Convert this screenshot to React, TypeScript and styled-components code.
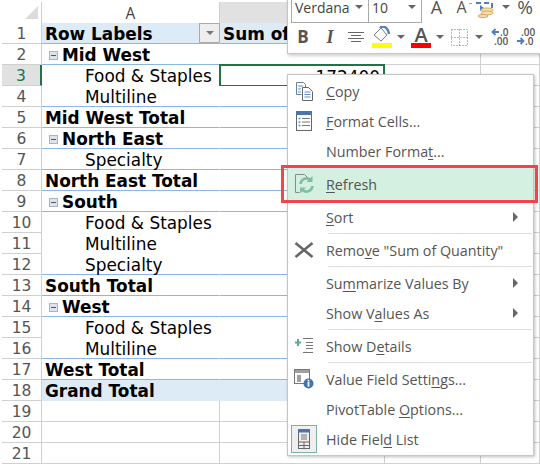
import React from "react";
import styled, { createGlobalStyle } from "styled-components";

const Global = createGlobalStyle`
  html, body { margin: 0; padding: 0; background: #fff; }
  * { box-sizing: border-box; }
`;

const UI = `"Open Sans", "Noto Sans", "Liberation Sans", sans-serif`;
const XL = `"DejaVu Sans", Verdana, sans-serif`;

const Page = styled.div`
  position: relative; width: 540px; height: 464px; overflow: hidden;
  background: #fff; font-family: ${XL}; padding-left: 2px;
`;
const COLS = "40px 178px 165px 96px 59px";
const HeadRow = styled.div`
  display: grid; grid-template-columns: ${COLS}; height: 23px;
  padding-top: 2px; border-bottom: 1px solid #d0d0d0;
`;
const Corner = styled.div`
  border-right: 1px solid #d0d0d0; position: relative; background: #fff;
  &::after { content: ""; position: absolute; left: 23px; top: 4px; width: 0; height: 0;
    border-left: 13px solid transparent; border-bottom: 13px solid #dcdcdc; }
`;
const ColHead = styled.div<{ $on?: boolean }>`
  display: flex; align-items: center; justify-content: center;
  font: 15.5px ${UI}; color: #444;
  border-right: 1px solid ${p => (p.$on ? "#c8c8c8" : "#d0d0d0")};
  background: ${p => (p.$on ? "#e1e1e1" : "#fff")};
  border-bottom: ${p => (p.$on ? "2px solid #217346" : "none")};
  margin-bottom: ${p => (p.$on ? "-1px" : "0")};
`;
const Row = styled.div`
  display: grid; grid-template-columns: ${COLS}; grid-template-rows: 21px; height: 21px;
`;
const Num = styled.div<{ $on?: boolean }>`
  display: flex; align-items: center; justify-content: center; padding-top: 2px;
  font: 15.5px/18px ${XL}; color: ${p => (p.$on ? "#217346" : "#555")};
  background: ${p => (p.$on ? "#e1e1e1" : "#fff")};
  border-bottom: 1px solid #d0d0d0;
  border-right: ${p => (p.$on ? "2px solid #217346" : "1px solid #d0d0d0")};
`;
type Kind = "head" | "group" | "item" | "total" | "grand" | "empty";
const Cell = styled.div<{ $kind: Kind; $line?: boolean }>`
  position: relative; display: flex; align-items: center; white-space: nowrap;
  font-family: ${XL}; font-size: 16.9px; line-height: 18px; color: #000;
  font-weight: ${p => (p.$kind === "item" || p.$kind === "empty" ? 400 : 700)};
  padding-left: ${p => (p.$kind === "item" ? 43 : p.$kind === "group" ? 7 : 3)}px;
  padding-top: 2px;
  background: ${p => (p.$kind === "head" || p.$kind === "grand" ? "#ddebf7" : "#fff")};
  border-bottom: 1px solid ${p => (p.$kind === "empty" ? "#d0d0d0" : p.$line ? "#8ab8e2" : "transparent")};
  border-right: 1px solid ${p => (p.$kind === "empty" ? "#d0d0d0" : "transparent")};
`;
const Selected = styled.div`
  position: absolute; inset: -1px -1px -2px -1px; border: 2px solid #217346;
  display: flex; align-items: center; justify-content: flex-end; padding: 2px 3px 0 0;
  font: 400 16.9px/18px ${XL}; color: #000;
`;
const Plain = styled.div`
  border-bottom: 1px solid #d0d0d0; border-right: 1px solid #d0d0d0;
`;
const Collapse = styled.span`
  width: 9px; height: 9px; margin-right: 4px; border: 1px solid #a9b4c2; background: #dde3ea;
  display: inline-flex; align-items: center; justify-content: center;
  &::after { content: ""; width: 5px; height: 1px; background: #555; }
`;
const Filter = styled.span`
  margin: -2px -1px 0 auto; width: 21px; height: 20px;
  background: #eeeeee; border: 1px solid #ababab;
  display: flex; align-items: center; justify-content: center;
  &::after { content: ""; border-left: 4px solid transparent; border-right: 4px solid transparent; border-top: 4px solid #777; }
`;

/* toolbar */
const Toolbar = styled.div`
  position: absolute; left: 287px; top: -6px; width: 256px; height: 60px;
  background: #fff; border: 1px solid #c6c6c6; box-shadow: 1px 2px 3px rgba(0,0,0,.18);
  font-family: ${UI}; color: #555;
  display: flex; flex-direction: column; gap: 6px; padding: 0 0 0 3px;
`;
const ToolRow = styled.div`
  display: flex; align-items: center; height: 24px; 
`;
const Combo = styled.div`
  display: flex; height: 28px; width: 131px; border: 1px solid #ababab; margin-right: 2px;
  align-self: flex-start;
`;
const ComboPart = styled.div<{ $w: number }>`
  width: ${p => p.$w}px; display: flex; align-items: center; justify-content: space-between;
  padding: 0 5px 4px 3px; font-size: 14px; color: #444;
  & + & { border-left: 1px solid #ababab; }
`;
const Caret = styled.span<{ $mx?: number }>`
  display: inline-block; flex: none; margin: 0 ${p => p.$mx ?? 0}px;
  border-left: 4px solid transparent; border-right: 4px solid transparent; border-top: 4px solid #666;
`;
const Glyph = styled.span<{ $w: number; $size: number; $serif?: boolean; $it?: boolean; $bold?: boolean }>`
  width: ${p => p.$w}px; text-align: center; flex: none; color: #555;
  font-size: ${p => p.$size}px; line-height: 24px;
  font-family: ${p => (p.$serif ? `"Liberation Serif", serif` : UI)};
  font-style: ${p => (p.$it ? "italic" : "normal")};
  font-weight: ${p => (p.$bold ? 700 : 400)};
`;
const Tool = styled.span<{ $w: number; $ml?: number }>`
  display: flex; flex: none; width: ${p => p.$w}px; margin-left: ${p => p.$ml ?? 0}px;
  justify-content: center; align-items: center;
`;
const Dec = styled.text`
  font: 600 10px ${UI}; fill: #555;
`;

/* menu */
const Menu = styled.div`
  position: absolute; left: 287px; top: 74px; width: 247px; height: 382px;
  background: #fff; border: 1px solid #c6c6c6; box-shadow: 1px 1px 3px rgba(0,0,0,.25);
  padding: 1px 1px 0 1px; font-family: ${UI};
`;
const Item = styled.div<{ $on?: boolean }>`
  position: relative; display: flex; align-items: center; height: 30px;
  background: ${p => (p.$on ? "#d3f0e0" : "transparent")};
  box-shadow: ${p => (p.$on ? "0 0 0 1px #d3f0e0" : "none")};
  color: #555; font-size: 14.3px; white-space: nowrap;
`;
const IconBox = styled.span<{ $frame?: boolean }>`
  width: 26px; height: 28px; margin: 0 9px 0 2px; flex: none;
  display: flex; align-items: center; justify-content: center;
  ${p => p.$frame ? "border: 1px solid #7db39c; background: #efefef;" : ""}
`;
const Arrow = styled.span`
  position: absolute; right: 14px; top: 10px;
  border-top: 5px solid transparent; border-bottom: 5px solid transparent; border-left: 5px solid #666;
`;
const Sep = styled.div`
  height: 1px; margin: 1px 0 1px 39px; background: #dcdcdc;
`;
const RedBox = styled.div`
  position: absolute; left: -8px; right: -6px; top: -4px; bottom: -4px;
  border: 3px solid #f2444a; pointer-events: none;
`;
const M = styled.u`
  text-underline-offset: 2px; text-decoration-thickness: 1px;
`;
const SmallA = styled.span`
  position: relative; display: flex; flex: none;
  &::after { content: ""; position: absolute; right: 2px; top: 8px; width: 3px; height: 1px; background: #7aa7d8; }
`;

const CopyIcon = () => (
  <svg width="19" height="21" viewBox="0 0 19 21" fill="none">
    <path d="M1.5 1.5h7l2 2v3M1.5 1.5v12h5" stroke="#6b7f99" />
    <path d="M3 5h5M3 8h3M3 11h3" stroke="#5f8fc4" />
    <path d="M7.5 6.5h6l4 4v9h-10z" fill="#fff" stroke="#666" />
    <path d="M9.5 11h6M9.5 13.5h6M9.5 16h6" stroke="#5f8fc4" />
  </svg>
);
const FormatIcon = () => (
  <svg width="17" height="20" viewBox="0 0 17 20" fill="none">
    <rect x="0.5" y="0.5" width="15" height="19" stroke="#666" />
    <rect x="0" y="0" width="16" height="4" fill="#4f74ad" />
    <path d="M6 7.5h8M6 11h8M6 14.5h8" stroke="#777" />
    <path d="M2.5 7.5h2M2.5 11h2M2.5 14.5h2" stroke="#5f8fc4" strokeWidth="1.6" />
  </svg>
);
const RefreshIcon = () => (
  <svg width="21" height="22" viewBox="0 0 21 22" fill="none">
    <path d="M1.5 1.5h9l4 4M1.5 1.5v18h4" stroke="#8a8a8a" />
    <path d="M6.5 11a6 6 0 0 1 10-4" stroke="#7fbf9e" strokeWidth="2.6" />
    <path d="M18.5 3v6h-6z" fill="#7fbf9e" />
    <path d="M18.5 13a6 6 0 0 1-10 4" stroke="#7fbf9e" strokeWidth="2.6" />
    <path d="M6 20.5v-6h6z" fill="#7fbf9e" />
  </svg>
);
const XIcon = () => (
  <svg width="20" height="16" viewBox="0 0 20 16" fill="none">
    <path d="M1.5 1l17 14M18.5 1L1.5 15" stroke="#666" strokeWidth="2.6" />
  </svg>
);
const DetailsIcon = () => (
  <svg width="18" height="16" viewBox="0 0 18 16" fill="none">
    <path d="M3 1v7M0 4.5h6" stroke="#66a98a" strokeWidth="2" />
    <path d="M8 .5h10M11 4.5h7M11 7.5h7M11 10.5h7M8 14.5h10" stroke="#777" />
  </svg>
);
const ValueIcon = () => (
  <svg width="20" height="20" viewBox="0 0 20 20" fill="none">
    <rect x="0.5" y="0.5" width="15" height="14" stroke="#777" fill="#fff" />
    <rect x="1" y="1" width="14" height="3" fill="#a0a0a0" />
    <rect x="3" y="6" width="4" height="7" fill="#a0a0a0" />
    <circle cx="14.5" cy="14.5" r="5" fill="#3f73b4" />
    <rect x="13.6" y="13" width="1.8" height="4.6" fill="#fff" />
    <rect x="13.6" y="10.8" width="1.8" height="1.6" fill="#fff" />
  </svg>
);
const FieldIcon = () => (
  <svg width="12" height="20" viewBox="0 0 12 20" fill="none">
    <rect x="0.5" y="0.5" width="11" height="19" stroke="#666" />
    <rect x="0" y="0" width="12" height="3.5" fill="#4f74ad" />
    <path d="M3 6h6M3 8h6M3 10h6" stroke="#777" />
    <path d="M0 13h12M0 16.5h12M6 13v7" stroke="#666" />
  </svg>
);
const CoinsIcon = () => (
  <svg width="20" height="22" viewBox="0 0 20 22" fill="none">
    <path d="M1 7h16v5" stroke="#4f80bd" strokeWidth="2" strokeDasharray="5 3" />
    <path d="M5 9l4 3-4 3z" fill="#4f80bd" />
    <ellipse cx="12" cy="14" rx="6" ry="2" fill="#f6dfae" stroke="#d9a860" />
    <ellipse cx="12" cy="17" rx="6" ry="2" fill="#f6dfae" stroke="#d9a860" />
    <ellipse cx="8" cy="20" rx="5" ry="1.6" fill="#f6dfae" stroke="#d9a860" />
  </svg>
);
const AlignIcon = () => (
  <svg width="16" height="11" viewBox="0 0 16 11"><path d="M0 .5h16M3 3.5h10M0 6.5h16M3 9.5h10" stroke="#666" fill="none" /></svg>
);
const FillIcon = () => (
  <svg width="20" height="23" viewBox="0 0 20 23" fill="none">
    <path d="M2 9l7-7 6 7-6 6z" stroke="#777" fill="#fff" />
    <path d="M8 2c3-3 8-1 9 6" stroke="#4f80bd" strokeWidth="2.4" />
    <rect x="0" y="17" width="20" height="5" fill="#ffff00" />
  </svg>
);
const FontColorIcon = () => (
  <svg width="20" height="23" viewBox="0 0 20 23">
    <text x="10" y="15.5" textAnchor="middle" fontFamily="Open Sans" fontSize="20" fontWeight="600" fill="#555">A</text>
    <rect x="0" y="17" width="20" height="5" fill="#f00" />
  </svg>
);
const BorderIcon = () => (
  <svg width="17" height="17" viewBox="0 0 17 17" fill="none">
    <path d="M.5.5h16v16H.5zM8.5.5v16M.5 8.5h16" stroke="#777" strokeDasharray="1 2" />
  </svg>
);
const DecIcon = ({ more }: { more?: boolean }) => (
  <svg width="20" height="18" viewBox="0 0 20 18" fill="none">
    {more ? (
      <>
        <Dec x="4" y="8">.00</Dec>
        <path d="M0 13h6M3.5 10l3 3-3 3" stroke="#4f80bd" strokeWidth="1.8" />
        <Dec x="8" y="17">.0</Dec>
      </>
    ) : (
      <>
        <path d="M9 4H3M5.5 1l-3 3 3 3" stroke="#4f80bd" strokeWidth="1.8" />
        <Dec x="10" y="8">.0</Dec>
        <Dec x="4" y="17">.00</Dec>
      </>
    )}
  </svg>
);

type R = { t: string; k: Kind; line?: boolean };
const rows: R[] = [
  { t: "Row Labels", k: "head", line: true },
  { t: "Mid West", k: "group", line: true },
  { t: "Food & Staples", k: "item" },
  { t: "Multiline", k: "item", line: true },
  { t: "Mid West Total", k: "total", line: true },
  { t: "North East", k: "group", line: true },
  { t: "Specialty", k: "item", line: true },
  { t: "North East Total", k: "total", line: true },
  { t: "South", k: "group", line: true },
  { t: "Food & Staples", k: "item" },
  { t: "Multiline", k: "item" },
  { t: "Specialty", k: "item", line: true },
  { t: "South Total", k: "total", line: true },
  { t: "West", k: "group", line: true },
  { t: "Food & Staples", k: "item" },
  { t: "Multiline", k: "item", line: true },
  { t: "West Total", k: "total", line: true },
  { t: "Grand Total", k: "grand" },
  { t: "", k: "empty" },
  { t: "", k: "empty" },
  { t: "", k: "empty" },
];

export default function App() {
  return (
    <Page>
      <Global />
      <HeadRow>
        <Corner />
        <ColHead>A</ColHead>
        <ColHead $on />
        <ColHead />
        <ColHead />
      </HeadRow>
      {rows.map((r, i) => (
        <Row key={i}>
          <Num $on={i === 2}>{i + 1}</Num>
          <Cell $kind={r.k} $line={r.line}>
            {r.k === "group" && <Collapse />}
            {r.t}
            {r.k === "head" && <Filter />}
          </Cell>
          <Cell $kind={r.k} $line={r.line}>
            {r.k === "head" && "Sum of"}
            {i === 2 && <Selected>172400</Selected>}
          </Cell>
          <Plain />
          <Plain />
        </Row>
      ))}

      <Toolbar>
        <ToolRow>
          <Combo>
            <ComboPart $w={76}>Verdana<Caret /></ComboPart>
            <ComboPart $w={53}>10<Caret /></ComboPart>
          </Combo>
          <Glyph $w={25} $size={18}>A</Glyph>
          <SmallA><Glyph $w={25} $size={16}>A</Glyph></SmallA>
          <Tool $w={22}><CoinsIcon /></Tool>
          <Caret $mx={6} />
          <Glyph $w={18} $size={19}>%</Glyph>
        </ToolRow>
        <ToolRow>
          <Glyph $w={24} $size={17} $bold>B</Glyph>
          <Glyph $w={30} $size={18} $serif $it $bold>I</Glyph>
          <Tool $w={22}><AlignIcon /></Tool>
          <Tool $w={20} $ml={5}><FillIcon /></Tool>
          <Caret $mx={5} />
          <Tool $w={20} $ml={1}><FontColorIcon /></Tool>
          <Caret $mx={5} />
          <Tool $w={17} $ml={2}><BorderIcon /></Tool>
          <Caret $mx={7} />
          <Tool $w={20}><DecIcon /></Tool>
          <Tool $w={20} $ml={7}><DecIcon more /></Tool>
        </ToolRow>
      </Toolbar>

      <Menu>
        <Item><IconBox><CopyIcon /></IconBox><span><M>C</M>opy</span></Item>
        <Item><IconBox><FormatIcon /></IconBox><span><M>F</M>ormat Cells...</span></Item>
        <Item><IconBox /><span>Number Forma<M>t</M>...</span></Item>
        <Sep />
        <Item $on><IconBox><RefreshIcon /></IconBox><span><M>R</M>efresh</span><RedBox /></Item>
        <Sep />
        <Item><IconBox /><span><M>S</M>ort</span><Arrow /></Item>
        <Sep />
        <Item><IconBox><XIcon /></IconBox><span>Remo<M>v</M>e "Sum of Quantity"</span></Item>
        <Sep />
        <Item><IconBox /><span>Su<M>m</M>marize Values By</span><Arrow /></Item>
        <Item><IconBox /><span>Show V<M>a</M>lues As</span><Arrow /></Item>
        <Sep />
        <Item><IconBox><DetailsIcon /></IconBox><span>Show D<M>e</M>tails</span></Item>
        <Sep />
        <Item><IconBox><ValueIcon /></IconBox><span>Value Field Setti<M>n</M>gs...</span></Item>
        <Item><IconBox /><span>PivotTable <M>O</M>ptions...</span></Item>
        <Item><IconBox $frame><FieldIcon /></IconBox><span>Hide Fiel<M>d</M> List</span></Item>
      </Menu>
    </Page>
  );
}
